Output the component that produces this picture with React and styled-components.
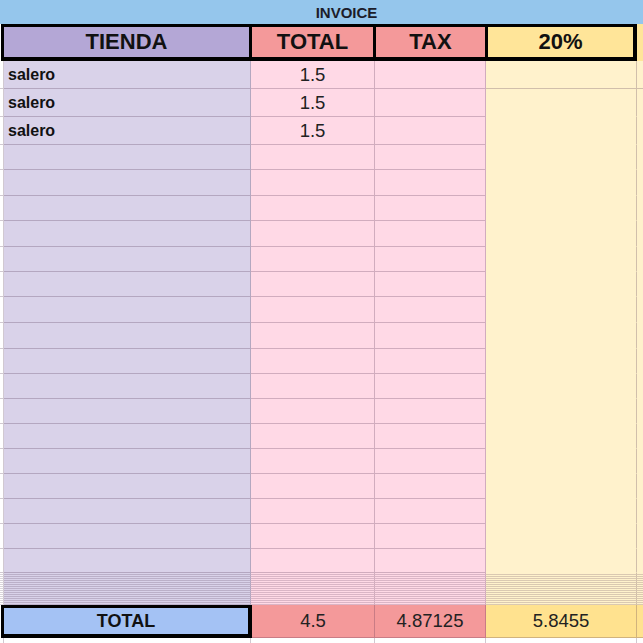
import React from "react";
import styled, { createGlobalStyle } from "styled-components";

const GlobalStyle = createGlobalStyle`
  body {
    margin: 0;
    background: #fff;
    font-family: "Liberation Sans", Arial, sans-serif;
    overflow: hidden;
  }
`;

const LINE = "rgba(70, 40, 70, 0.25)";

const COLS = [
  { key: "gutter", w: 4, bg: "#ffffff" },
  { key: "tienda", w: 247, bg: "#d9d2e9" },
  { key: "total", w: 124, bg: "#ffd9e6" },
  { key: "tax", w: 111, bg: "#ffd9e6" },
  { key: "pct", w: 151, bg: "#fff2cc", plain: true },
  { key: "next", w: 6, bg: "#fff2cc", plain: true, last: true },
];

const items = [
  { tienda: "salero", total: "1.5" },
  { tienda: "salero", total: "1.5" },
  { tienda: "salero", total: "1.5" },
];

const EMPTY_ROWS = [25, 26, 25, 26, 25, 25, 26, 26, 25, 25, 25, 25, 25, 25, 25, 25, 24];
const DENSE_ROWS = 16;

export default function App() {
  return (
    <>
      <GlobalStyle />
      <Sheet>
        <TitleBar>INVOICE</TitleBar>

        <HeaderRow>
          <Gap $w={1} />
          <HeaderFrame>
            <HeadCell $w={245} $bg="#b4a7d6">TIENDA</HeadCell>
            <HeadCell $w={121} $bg="#f4999a">TOTAL</HeadCell>
            <HeadCell $w={109} $bg="#f4999a">TAX</HeadCell>
            <HeadCell $w={145} $bg="#ffe599">20%</HeadCell>
          </HeaderFrame>
          <Gap $w={6} $bg="#ffe599" />
        </HeaderRow>

        {items.map((item, i) => (
          <Row key={i} $h={28}>
            {COLS.map((c) => (
              <Cell
                key={c.key}
                $w={c.w}
                $bg={c.bg}
                $last={c.last}
                $plain={c.plain && i > 0}
                $center={c.key === "total"}
              >
                {c.key === "tienda" && <Name>{item.tienda}</Name>}
                {c.key === "total" && <Num>{item.total}</Num>}
              </Cell>
            ))}
          </Row>
        ))}

        {EMPTY_ROWS.map((h, i) => (
          <Row key={"e" + i} $h={h}>
            {COLS.map((c) => (
              <Cell
                key={c.key}
                $w={c.w}
                $bg={c.bg}
                $last={c.last}
                $plain={c.plain}
              />
            ))}
          </Row>
        ))}

        {Array.from({ length: DENSE_ROWS }).map((_, i) => (
          <Row key={"d" + i} $h={2}>
            {COLS.map((c) => (
              <Cell key={c.key} $w={c.w} $bg={c.bg} $last={c.last} $faint />
            ))}
          </Row>
        ))}

        <TotalRow>
          <Gap $w={1} />
          <TotalLabel>TOTAL</TotalLabel>
          <TotalCell $w={123} $bg="#f4999a">4.5</TotalCell>
          <TotalCell $w={111} $bg="#f4999a">4.87125</TotalCell>
          <TotalCell $w={151} $bg="#ffe28f">5.8455</TotalCell>
          <TotalCell $w={6} $bg="#ffe28f" $last />
        </TotalRow>

        <Row $h={6}>
          {COLS.map((c) => (
            <Cell key={c.key} $w={c.w} $bg="#fff" $last={c.last} $plain />
          ))}
        </Row>
      </Sheet>
    </>
  );
}

const Sheet = styled.div`
  width: 643px;
  height: 643px;
  overflow: hidden;
`;

const TitleBar = styled.div`
  height: 24px;
  box-sizing: border-box;
  padding: 3px 0 0 50px;
  background: #95c6ec;
  color: #1c1c2a;
  font-size: 15px;
  font-weight: bold;
  text-align: center;
  line-height: 20px;
`;

const HeaderRow = styled.div`
  display: flex;
  height: 37px;
`;

const Gap = styled.div`
  flex: none;
  width: ${({ $w }) => $w}px;
  background: ${({ $bg }) => $bg || "#fff"};
`;

const HeaderFrame = styled.div`
  display: flex;
  gap: 3px;
  width: 636px;
  box-sizing: border-box;
  padding: 3px 4px 4px 3px;
  background: #000;
`;

const HeadCell = styled.div`
  flex: none;
  width: ${({ $w }) => $w}px;
  display: flex;
  align-items: center;
  justify-content: center;
  background: ${({ $bg }) => $bg};
  color: #111;
  font-size: 22px;
  font-weight: bold;
`;

const Row = styled.div`
  display: flex;
  height: ${({ $h }) => $h}px;
`;

const Cell = styled.div`
  flex: none;
  box-sizing: border-box;
  width: ${({ $w }) => $w}px;
  display: flex;
  align-items: center;
  justify-content: ${({ $center }) => ($center ? "center" : "flex-start")};
  background: ${({ $bg }) => $bg};
  border-right: ${({ $last }) => ($last ? "none" : `1px solid ${LINE}`)};
  border-bottom: 1px solid
    ${({ $plain, $faint }) =>
      $plain ? "transparent" : $faint ? "rgba(70, 40, 70, 0.2)" : LINE};
`;

const Name = styled.span`
  padding-left: 4px;
  color: #111;
  font-size: 16px;
  font-weight: bold;
`;

const Num = styled.span`
  color: #222;
  font-size: 18.5px;
`;

const TotalRow = styled.div`
  display: flex;
  height: 33px;
`;

const TotalLabel = styled.div`
  flex: none;
  box-sizing: border-box;
  width: 251px;
  display: flex;
  align-items: center;
  justify-content: center;
  border: 3px solid #000;
  border-right-width: 4px;
  border-bottom-width: 4px;
  background: #a4c2f4;
  color: #111;
  font-size: 18px;
  font-weight: bold;
`;

const TotalCell = styled.div`
  flex: none;
  box-sizing: border-box;
  width: ${({ $w }) => $w}px;
  display: flex;
  align-items: center;
  justify-content: center;
  background: ${({ $bg }) => $bg};
  border-right: ${({ $last }) => ($last ? "none" : `1px solid ${LINE}`)};
  border-bottom: 1px solid ${LINE};
  color: #222;
  font-size: 18.5px;
`;
